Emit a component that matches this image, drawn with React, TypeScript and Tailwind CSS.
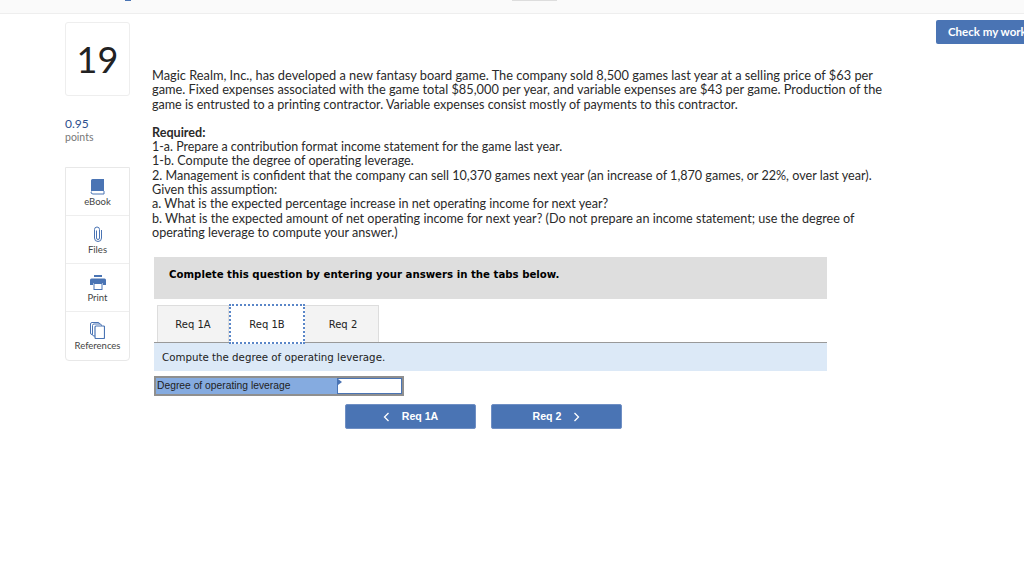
import React from "react";

const sans = "font-['Lato','Liberation_Sans',sans-serif]";
const verdana = "font-['DejaVu_Sans','Liberation_Sans',sans-serif]";
const blue = "#4a74b4";

function Book() {
  return (
    <svg width="15" height="17" viewBox="0 0 15 17">
      <path d="M1 14V2.5A1.5 1.5 0 0 1 2.5 1H14v12H2.5A1.5 1.5 0 0 0 1 14Z" fill={blue} />
      <path d="M1 14a2 2 0 0 0 2 2h11v-3" fill="none" stroke={blue} strokeWidth="1" />
    </svg>
  );
}
function Clip() {
  return (
    <svg width="10" height="17" viewBox="0 0 10 17">
      <path d="M3.5 4.5v7.5a1.5 1.5 0 0 0 3 0V3.5a2.5 2.5 0 0 0-5 0V12a3.5 3.5 0 0 0 7 0V4" fill="none" stroke={blue} strokeWidth="1" />
    </svg>
  );
}
function Printer() {
  return (
    <svg width="16" height="15" viewBox="0 0 16 15">
      <rect x="4" y="0" width="8" height="2" fill={blue} />
      <path d="M1.5 3.5h13A1.5 1.5 0 0 1 16 5v5h-3V8H3v2H0V5a1.5 1.5 0 0 1 1.5-1.5Z" fill={blue} />
      <rect x="4" y="8.5" width="8" height="6" fill="#fff" stroke={blue} />
    </svg>
  );
}
function Copies() {
  return (
    <svg width="15" height="17" viewBox="0 0 15 17">
      <rect x="0.5" y="0.5" width="9" height="12" rx="1.5" fill="#fff" stroke={blue} />
      <rect x="2.5" y="2" width="9" height="12" rx="1.5" fill="#fff" stroke={blue} />
      <rect x="5" y="4" width="9.5" height="12.5" rx="1" fill="#fff" stroke={blue} strokeWidth="1.2" />
    </svg>
  );
}

function Tool({ icon, label, last }: { icon: React.ReactNode; label: string; last?: boolean }) {
  return (
    <div className={`h-[48px] flex flex-col items-center pt-[9px] ${last ? "" : "border-b border-[#eeeeee]"}`}>
      <div className="h-[18px] flex items-center justify-center">{icon}</div>
      <div className="mt-[1px] text-[9.5px] leading-[12px] text-[#444]">{label}</div>
    </div>
  );
}

function NavButton({ children }: { children: React.ReactNode }) {
  return (
    <button className="w-[131px] h-[25px] rounded-[2px] bg-[#4a74b4] border border-[#6f8fc4] text-white text-[10.6px] font-bold font-['Liberation_Sans',sans-serif] flex items-center justify-center gap-[12px]">
      {children}
    </button>
  );
}

export default function App() {
  return (
    <div className={`w-[1024px] h-[563px] overflow-hidden bg-white ${sans}`}>
      <div className="h-[14px] bg-[#fafafa] border-b border-[#eeeeee] relative">
        <div className="absolute left-[125px] top-0 w-[6px] h-[1px] bg-[#4a74b4]" />
        <div className="absolute left-[512px] top-0 w-[45px] h-[1px] bg-[#dddddd]" />
      </div>
      <div className="flex">
        <aside className="ml-[65px] w-[65px] shrink-0 pt-[8px]">
          <div className="h-[74px] border border-[#eeeeee] rounded-[3px] flex items-center justify-center text-[36px] text-[#222]">19</div>
          <div className="mt-[21px] text-[12px] leading-[14px] text-[#2d4f8e]">0.95</div>
          <div className="text-[10.5px] leading-[12px] text-[#777]">points</div>
          <div className="mt-[24px] border border-[#e8e8e8] rounded-b-[4px]">
            <Tool icon={<Book />} label="eBook" />
            <Tool icon={<Clip />} label="Files" />
            <Tool icon={<Printer />} label="Print" />
            <Tool icon={<Copies />} label="References" last />
          </div>
        </aside>
        <main className="ml-[22px] w-[735px] shrink-0 pt-[54px] text-[#2a2a2a]">
          <p className="text-[12.8px] leading-[14.3px] whitespace-nowrap">
            Magic Realm, Inc., has developed a new fantasy board game. The company sold 8,500 games last year at a selling price of $63 per<br />
            game. Fixed expenses associated with the game total $85,000 per year, and variable expenses are $43 per game. Production of the<br />
            <span className="text-[12.57px]">game is entrusted to a printing contractor. Variable expenses consist mostly of payments to this contractor.</span>
          </p>
          <p className="mt-[14px] text-[12.6px] leading-[14.3px] whitespace-nowrap">
            <b className="font-bold">Required:</b><br />
            <span className="text-[12.45px]">1-a. Prepare a contribution format income statement for the game last year.</span><br />
            1-b. Compute the degree of operating leverage.<br />
            2. Management is confident that the company can sell 10,370 games next year (an increase of 1,870 games, or 22%, over last year).<br />
            Given this assumption:<br />
            a. What is the expected percentage increase in net operating income for next year?<br />
            b. What is the expected amount of net operating income for next year? (Do not prepare an income statement; use the degree of<br />
            operating leverage to compute your answer.)
          </p>
          <div className={`ml-[2px] mt-[17px] w-[673px] ${verdana}`}>
            <div className="h-[42px] bg-[#dedede] pl-[15px] pt-[11px] text-[10.2px] leading-[14px] font-bold text-black">
              Complete this question by entering your answers in the tabs below.
            </div>
            <div className="mt-[6px] h-[38px] pl-[3px] flex border-b border-[#999] text-[10px] text-[#222]">
              <div className="w-[72px] h-[37px] bg-[#f3f3f3] border border-[#ddd] border-b-0 flex items-center justify-center">Req 1A</div>
              <div className="w-[76px] h-[40px] -mt-[1px] bg-white border-2 border-dotted border-[#5a86c8] flex items-center justify-center">Req 1B</div>
              <div className="w-[74px] h-[37px] bg-[#f3f3f3] border border-[#ddd] border-b-0 border-l-0 flex items-center justify-center pl-[3px]">Req 2</div>
            </div>
            <div className="h-[28px] bg-[#dce9f7] pl-[8px] flex items-center text-[10.25px] text-[#222]">
              Compute the degree of operating leverage.
            </div>
            <div className="mt-[5px] w-[250px] h-[20px] flex border-2 border-[#8f8f8f] font-['Liberation_Sans',sans-serif]">
              <div className="w-[181px] bg-[#85abe0] pl-[1px] text-[10.3px] leading-[15px] text-[#222]">Degree of operating leverage</div>
              <div className="relative flex-1 bg-white border border-[#4a74b4]">
                <div className="absolute left-0 top-0 border-l-[4px] border-l-[#4a74b4] border-y-[3px] border-y-transparent" />
              </div>
            </div>
            <div className="mt-[8px] ml-[191px] flex gap-[15px]">
              <NavButton>
                <svg width="7" height="10" viewBox="0 0 7 10"><path d="M5.5 1 1.5 5l4 4" fill="none" stroke="#fff" strokeWidth="1.3" /></svg>
                <span>Req 1A</span>
              </NavButton>
              <NavButton>
                <span>Req 2</span>
                <svg width="7" height="10" viewBox="0 0 7 10"><path d="M1.5 1l4 4-4 4" fill="none" stroke="#fff" strokeWidth="1.3" /></svg>
              </NavButton>
            </div>
          </div>
        </main>
        <div className="ml-[49px] mt-[6px] w-[100px] shrink-0 h-[24px] rounded-[2px] bg-[#4a74b4] pl-[12px] text-white text-[11.5px] leading-[24px] font-bold whitespace-nowrap">
          Check my work
        </div>
      </div>
    </div>
  );
}
